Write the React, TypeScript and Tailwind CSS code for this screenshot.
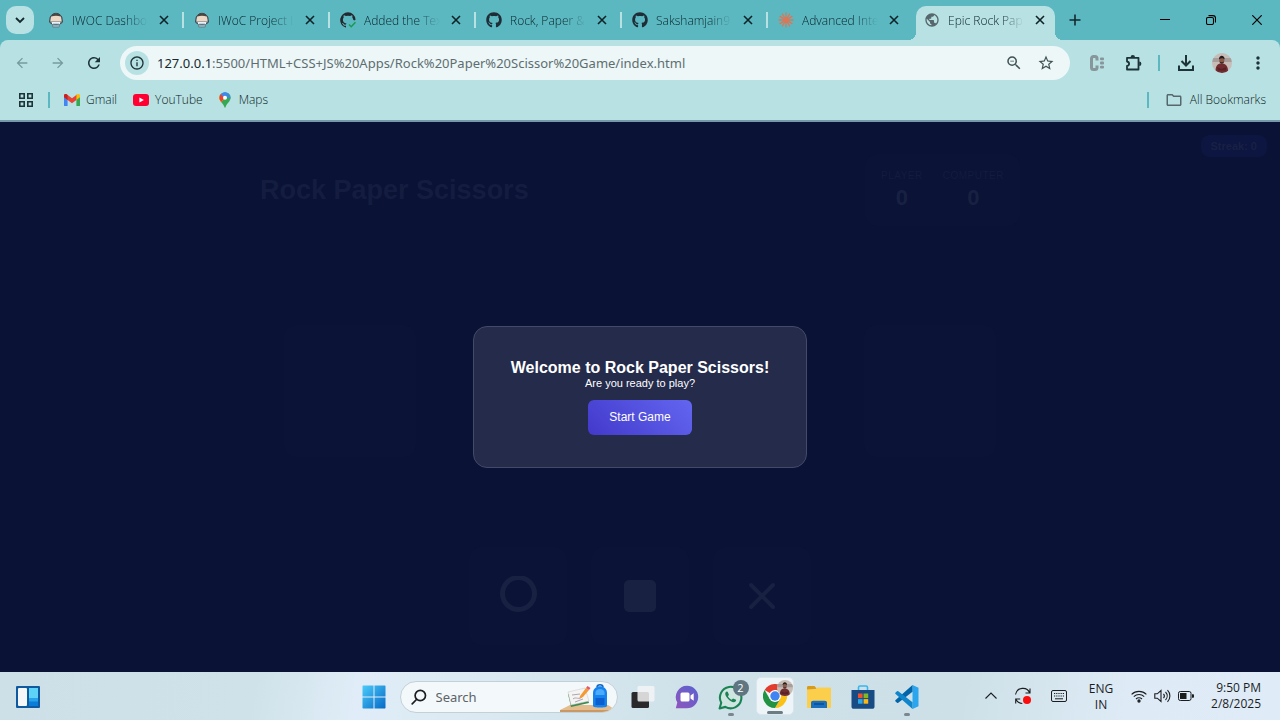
import type { ReactNode } from "react";
import { FaGithub } from "react-icons/fa";
import {
  MdArrowBack,
  MdArrowForward,
  MdInfoOutline,
  MdMoreVert,
  MdPublic,
  MdRefresh,
  MdStarBorder,
  MdOutlineZoomOut,
  MdOutlineFolder,
} from "react-icons/md";

function BotIcon() {
  return (
    <svg viewBox="0 0 16 16" className="size-4">
      <path d="M4 11h8l-.800 4H4.800Z" fill="#cfe6ee" stroke="#4c5a66" strokeWidth=".6" />
      <path d="M1.800 7.500a6.200 6.200 0 0 1 12.400 0c.500 1.800.200 3.600-1.400 4-2.500.800-7.100.800-9.600 0-1.600-.4-1.900-2.200-1.400-4Z" fill="#8d9399" stroke="#3c3f46" strokeWidth="1" />
      <path d="M2.800 7a5.200 5.200 0 0 1 10.400 0l.200 2.300H2.600Z" fill="#ecd8c4" />
      <path d="M3.300 4.600a5 5 0 0 1 9.400 0c-2.500-1-6.900-1-9.400 0Z" fill="#4a4540" />
      <path d="M4 10h8v2H4Z" fill="#e8f1f5" />
      <path d="M6 11.500v3M8 11.500v3M10 11.500v3" stroke="#31576b" strokeWidth=".8" />
    </svg>
  );
}

function GithubCheckIcon() {
  return (
    <svg viewBox="0 0 16 16" className="size-4">
      <path
        d="M8 .3A7.800 7.800 0 0 0 5.500 15.500c.4.1.5-.2.5-.4v-1.400c-2 .4-2.600-.5-2.800-1-.1-.3-.5-1-.9-1.200-.3-.2-.7-.6 0-.6.700 0 1.200.6 1.300.9.700 1.200 1.900.9 2.400.7.1-.5.3-.9.500-1.100-1.800-.2-3.600-.9-3.600-3.900 0-.9.3-1.600.8-2.100-.1-.2-.4-1 .1-2.100 0 0 .7-.2 2.200.8a7.300 7.300 0 0 1 4 0c1.500-1 2.200-.8 2.200-.8.4 1.100.2 1.900.1 2.100.5.5.8 1.200.8 2.100l1 .9 1.500-.7A7.800 7.800 0 0 0 8 .3Z"
        fill="#24292f"
      />
      <path d="m9 12.500 2.200 2.200 4.300-4.500" fill="none" stroke="#1a9a50" strokeWidth="1.500" />
    </svg>
  );
}

function BurstIcon() {
  return (
    <svg viewBox="0 0 16 16" className="size-4" stroke="#d97757" strokeWidth="1.300" strokeLinecap="round">
      <path d="M8 1v14M1 8h14M4.400 2l7.200 12M11.600 2 4.400 14M2 4.400l12 7.200M14 4.400 2 11.600" />
    </svg>
  );
}

function Avatar({ className }: { className: string }) {
  return (
    <svg viewBox="0 0 20 20" className={className}>
      <defs>
        <clipPath id="face">
          <circle cx="10" cy="10" r="10" />
        </clipPath>
      </defs>
      <g clipPath="url(#face)">
        <rect width="20" height="20" fill="#c7bcb6" />
        <path d="M0 5h20v4H0Z" fill="#a79d9a" />
        <path d="M3.500 20c-.2-7 1.500-9.500 6-9.500s6.800 2.500 6.500 9.500Z" fill="#702c2f" />
        <path d="m5 14 4.500 2 5-2-1 3.500H6Z" fill="#5a2026" />
        <ellipse cx="9.800" cy="7.200" rx="2.500" ry="3.200" fill="#8a5a48" />
        <path d="M7 6.500c-.2-5 5.800-5 5.600 0-1.500-1.800-4-1.800-5.600 0Z" fill="#241b1c" />
        <path d="M7.600 8.500c.6 3 3.800 3 4.400 0-1 1-3.400 1-4.400 0Z" fill="#3a2523" />
      </g>
    </svg>
  );
}

const tabs: { title: string; icon: ReactNode }[] = [
  { title: "IWOC Dashbo", icon: <BotIcon /> },
  { title: "IWoC Project I", icon: <BotIcon /> },
  { title: "Added the Tex", icon: <GithubCheckIcon /> },
  { title: "Rock, Paper &", icon: <FaGithub className="size-4 text-[#1f2d36]" /> },
  { title: "Sakshamjain9", icon: <FaGithub className="size-4 text-[#1f2d36]" /> },
  { title: "Advanced Inte", icon: <BurstIcon /> },
];

function TabBody({ title, icon }: { title: string; icon: ReactNode }) {
  return (
    <>
      <span className="shrink-0">{icon}</span>
      <span className="w-[76px] shrink-0 whitespace-nowrap pt-0.5 text-[12px] leading-4 font-[350] text-[#0c2429] [mask-image:linear-gradient(to_right,black_70%,transparent)]">
        {title}
      </span>
      <button type="button" aria-label={`Close ${title}`} className="flex size-4 shrink-0 items-center justify-center">
        <svg viewBox="0 0 10 10" className="size-2.5" stroke="#0d2327" strokeWidth="1.600">
          <path d="m1 1 8 8M9 1 1 9" />
        </svg>
      </button>
    </>
  );
}

function TabStrip() {
  return (
    <div className="flex h-10 items-stretch bg-[#5bb8c1]">
      <div className="flex w-[38px] shrink-0 items-center pl-1.5">
        <button type="button" aria-label="Search tabs" className="flex size-7 items-center justify-center rounded-[10px] bg-[#b8e1e4]">
          <svg viewBox="0 0 10 10" className="size-2.5" fill="none" stroke="#12292d" strokeWidth="1.800">
            <path d="m1 3 4 4 4-4" />
          </svg>
        </button>
      </div>
      <div className="flex min-w-0">
        {tabs.map((tab, i) => (
          <div key={tab.title} className="flex w-[146px] items-center gap-2 pl-2.5">
            <TabBody {...tab} />
            {i < tabs.length - 1 && <span className="-mr-1 ml-0.5 h-4 w-0.5 shrink-0 bg-[#b8e1e4]" />}
          </div>
        ))}
        <div className="relative mt-1.5 mr-[5px] ml-0.5 flex w-[139px] items-center gap-2 rounded-t-[10px] bg-[#b8e1e4] pb-1.5 pl-2">
          <span className="absolute bottom-0 -left-2 size-2 bg-[radial-gradient(circle_at_0_0,#5bb8c1_8px,#b8e1e4_8px)]" />
          <span className="absolute -right-2 bottom-0 size-2 bg-[radial-gradient(circle_at_100%_0,#5bb8c1_8px,#b8e1e4_8px)]" />
          <TabBody title="Epic Rock Pap" icon={<MdPublic className="size-4 text-[#56686c]" />} />
        </div>
      </div>
      <button type="button" aria-label="New tab" className="flex w-[30px] shrink-0 items-center justify-center">
        <svg viewBox="0 0 12 12" className="size-3" stroke="#12292d" strokeWidth="1.600">
          <path d="M6 .5v11M.5 6h11" />
        </svg>
      </button>
      <div className="ml-auto flex shrink-0">
        <button type="button" aria-label="Minimize" className="flex w-[46px] items-center justify-center">
          <svg viewBox="0 0 10 10" className="size-2.5" stroke="#000" strokeWidth="1">
            <path d="M0 4.500h10" />
          </svg>
        </button>
        <button type="button" aria-label="Restore" className="flex w-[46px] items-center justify-center">
          <svg viewBox="0 0 10 10" className="size-2.5" fill="none" stroke="#000" strokeWidth="1.100">
            <rect x=".5" y="2.500" width="7" height="7" rx="1.500" />
            <path d="M2.500.6H7a2.500 2.500 0 0 1 2.500 2.500v4.400" />
          </svg>
        </button>
        <button type="button" aria-label="Close window" className="flex w-[46px] items-center justify-center">
          <svg viewBox="0 0 10 10" className="size-2.5" stroke="#000" strokeWidth="1.200">
            <path d="m.3.300 9.400 9.400M9.700.300.300 9.700" />
          </svg>
        </button>
      </div>
    </div>
  );
}

function ToolButton({ label, children }: { label: string; children: ReactNode }) {
  return (
    <button type="button" aria-label={label} className="flex h-7 w-9 shrink-0 items-center justify-center text-[#1d3337]">
      {children}
    </button>
  );
}

function Toolbar() {
  return (
    <div className="bg-[#5bb8c1]">
      <div className="flex h-[46px] items-center rounded-t-lg bg-[#b8e1e4] px-1">
        <ToolButton label="Back">
          <MdArrowBack className="size-4 text-[#769a9d]" />
        </ToolButton>
        <ToolButton label="Forward">
          <MdArrowForward className="size-4 text-[#769a9d]" />
        </ToolButton>
        <ToolButton label="Reload">
          <MdRefresh className="size-[18px]" />
        </ToolButton>
        <div className="ml-2 flex h-[34px] flex-1 items-center rounded-full bg-[#edf7f8] pr-2 pl-[5px]">
          <button type="button" aria-label="Site information" className="flex size-6 items-center justify-center rounded-full bg-[#b8e1e4]">
            <MdInfoOutline className="size-4 text-[#1d3337]" />
          </button>
          <div className="ml-2 flex-1 whitespace-nowrap font-['Noto_Sans',sans-serif] text-[13px] leading-5 text-[#5e6e70]">
            <span className="text-[#17292c]">127.0.0.1</span>:5500/HTML+CSS+JS%20Apps/Rock%20Paper%20Scissor%20Game/index.html
          </div>
          <button type="button" aria-label="Zoom" className="flex w-8 justify-center">
            <MdOutlineZoomOut className="size-[18px] text-[#3f5356]" />
          </button>
          <button type="button" aria-label="Bookmark this tab" className="flex w-8 justify-center">
            <MdStarBorder className="size-[18px] text-[#3f5356]" />
          </button>
        </div>
        <div className="ml-[9px] flex items-center">
          <ToolButton label="C extension">
            <svg viewBox="0 0 16 16" className="size-4" fill="#87969b">
              <path d="M8 5.500V3.500a2 2 0 0 0-2-2H4.500a2 2 0 0 0-2 2v9a2 2 0 0 0 2 2H6a2 2 0 0 0 2-2v-2" fill="none" stroke="#87969b" strokeWidth="3" />
              <rect x="11" y="2.500" width="4" height="2.800" rx="1" />
              <rect x="11" y="6.600" width="4" height="2.800" rx="1" />
              <rect x="11" y="10.700" width="4" height="2.800" rx="1" />
            </svg>
          </ToolButton>
          <ToolButton label="Extensions">
            <svg viewBox="0 0 18 18" className="size-[18px]">
              <path d="M3 3.800h11.500v11.700H3v-3.500c2.800-.5 2.800-4 0-4.500Z" fill="none" stroke="#1d3337" strokeWidth="1.800" strokeLinejoin="round" />
              <path d="M6.600 3.200a2.200 2.200 0 0 1 4.400 0ZM15.200 7.500a2.200 2.200 0 0 1 0 4.400Z" fill="#1d3337" />
            </svg>
          </ToolButton>
          <span className="mr-2 ml-[7px] h-4 w-0.5 bg-[#5bb8c1]" />
          <ToolButton label="Downloads">
            <svg viewBox="0 0 18 18" className="size-[18px]" fill="none" stroke="#1d3337" strokeWidth="2">
              <path d="M9 1v10M4.500 7 9 11.500 13.500 7M2 11.500V16h14v-4.500" />
            </svg>
          </ToolButton>
          <ToolButton label="Profile">
            <Avatar className="size-5" />
          </ToolButton>
          <ToolButton label="Menu">
            <MdMoreVert className="size-5" />
          </ToolButton>
        </div>
      </div>
    </div>
  );
}

function BookmarksBar() {
  return (
    <nav className="flex h-9 items-center border-b-2 border-[#7898ab] bg-[#b8e1e4] px-3.5 pb-1.5 text-[12px] leading-4 font-[350] text-[#0c1e21]">
      <button type="button" aria-label="Apps" className="flex w-6 justify-center">
        <svg viewBox="0 0 14 14" className="size-3.5" fill="none" stroke="#1d3337" strokeWidth="1.600">
          <path d="M.8.800h4.400v4.400H.8ZM8.800.800h4.400v4.400H8.800ZM.8 8.800h4.400v4.400H.8ZM8.800 8.800h4.400v4.400H8.800Z" />
        </svg>
      </button>
      <span className="ml-2.5 h-4 w-0.5 bg-[#5bb8c1]" />
      <a href="#gmail" className="ml-3.5 flex items-center gap-1.5">
        <svg viewBox="0 0 16 12" className="h-3 w-4">
          <path d="M0 1.500V12h3.600V5Z" fill="#4285f4" />
          <path d="M16 1.500V12h-3.600V5Z" fill="#34a853" />
          <path d="M0 1.500C0 0 1.800-.5 3 .5l5 3.800 5-3.800v5L8 9.200 0 3.300Z" fill="#ea4335" />
          <path d="M12.400 1C14-.600 16 0 16 1.600v1.700l-3.600 2.800Z" fill="#fbbc04" />
          <path d="M3.600 1C2-.600 0 0 0 1.600v1.700l3.600 2.800Z" fill="#c5221f" />
        </svg>
        Gmail
      </a>
      <a href="#youtube" className="ml-4 flex items-center gap-1.5">
        <svg viewBox="0 0 16 12" className="h-3 w-4">
          <rect width="16" height="12" rx="3" fill="#ff0033" />
          <path d="m6.400 3.400 4.500 2.600-4.500 2.600Z" fill="#fff" />
        </svg>
        YouTube
      </a>
      <a href="#maps" className="ml-3.5 flex items-center gap-1.5">
        <svg viewBox="0 0 16 16" className="size-4">
          <defs>
            <clipPath id="pin">
              <path d="M8 .2a5.600 5.600 0 0 0-5.600 5.600c0 3.600 3.600 5 5 9.300.2.900 1 .9 1.200 0 1.400-4.300 5-5.700 5-9.300A5.600 5.600 0 0 0 8 .2Z" />
            </clipPath>
          </defs>
          <g clipPath="url(#pin)">
            <rect width="16" height="16" fill="#34a853" />
            <path d="M8 5.800 0 15V3Z" fill="#fbbc04" />
            <path d="M8 5.800 2.500 12-1 5l4-3.500Z" fill="#fbbc04" />
            <path d="m3.500 1.500 4.500 4.300-4 4.500L0 5Z" fill="#ea4335" />
            <path d="M3.600 2.300 8 6l5-5.500L7-1Z" fill="#4285f4" />
            <path d="m8 5.800 4.500-4.500L16 4v3Z" fill="#4285f4" opacity=".7" />
          </g>
          <circle cx="8" cy="5.800" r="2" fill="#fff" />
        </svg>
        Maps
      </a>
      <span className="mr-4 ml-auto h-4 w-0.5 bg-[#5bb8c1]" />
      <a href="#bookmarks" className="flex items-center gap-[7px]">
        <MdOutlineFolder className="size-[18px] text-[#56686c]" />
        All Bookmarks
      </a>
    </nav>
  );
}

function Score({ label, value }: { label: string; value: number }) {
  return (
    <div className="flex flex-col items-center gap-1">
      <span className="text-[10px] leading-3 tracking-wider text-[#131c3f]">{label}</span>
      <span className="text-[22px] leading-6 font-bold text-[#182142]">{value}</span>
    </div>
  );
}

function Game() {
  return (
    <main className="relative flex-1 bg-[#0a1235] font-['Liberation_Sans',sans-serif]">
      <div className="mx-auto max-w-[760px] pt-8">
        <header className="flex h-[72px] items-center justify-between">
          <h1 className="text-[27px] leading-8 font-bold text-[#141d40]">Rock Paper Scissors</h1>
          <div className="flex gap-5 self-stretch rounded-xl bg-[#0b1336] px-4 pt-4">
            <Score label="PLAYER" value={0} />
            <Score label="COMPUTER" value={0} />
          </div>
        </header>
        <div className="mt-[99px] flex justify-between px-6">
          <div className="size-[132px] rounded-xl bg-[#0b1336]" />
          <div className="size-[132px] rounded-xl bg-[#0b1336]" />
        </div>
        <div className="mt-[90px] flex justify-center gap-6 pb-6">
          <button type="button" aria-label="Rock" className="flex size-[98px] items-center justify-center rounded-xl bg-[#0b1336]">
            <svg viewBox="0 0 40 40" className="size-10" fill="none" stroke="#182142" strokeWidth="5">
              <circle cx="20.500" cy="17.500" r="16" />
            </svg>
          </button>
          <button type="button" aria-label="Paper" className="flex size-[98px] items-center justify-center rounded-xl bg-[#0b1336]">
            <span className="size-8 rounded-[5px] bg-[#182142]" />
          </button>
          <button type="button" aria-label="Scissors" className="flex size-[98px] items-center justify-center rounded-xl bg-[#0b1336]">
            <svg viewBox="0 0 28 28" className="size-7" stroke="#182142" strokeWidth="4" strokeLinecap="round">
              <path d="m3 3 22 22M25 3 3 25" />
            </svg>
          </button>
        </div>
      </div>
      <div className="absolute top-[13px] right-[13px] rounded-lg bg-[#0d1541] px-2.5 py-1 text-[11px] leading-3.5 font-bold text-[#182145]">
        Streak: 0
      </div>
      <div className="absolute inset-0 flex items-center justify-center">
        <div role="dialog" aria-labelledby="welcome" className="flex w-[334px] flex-col items-center rounded-[14px] border border-[#434a67] bg-[#242b4b] py-8 text-center text-white">
          <h2 id="welcome" className="text-[16px] leading-[18px] font-bold">
            Welcome to Rock Paper Scissors!
          </h2>
          <p className="text-[11px] leading-3">Are you ready to play?</p>
          <button type="button" className="mt-[11px] rounded-md bg-linear-45 from-[#4338ca] to-[#6366f1] px-[21px] py-2.5 text-[12px] leading-[15px]">
            Start Game
          </button>
        </div>
      </div>
    </main>
  );
}

function AppCell({ label, running, children }: { label: string; running?: boolean; children: ReactNode }) {
  return (
    <button type="button" aria-label={label} className="relative flex h-12 w-11 items-center justify-center pt-0.5">
      {children}
      {running && <span className="absolute bottom-1 left-1/2 h-[3px] w-1.5 -translate-x-1/2 rounded-full bg-[#7b878d]" />}
    </button>
  );
}

function Taskbar() {
  return (
    <footer className="grid h-12 grid-cols-[1fr_auto_1fr] items-center bg-[linear-gradient(100deg,#cde0e7_0%,#cfe2e9_20%,#e0edf8_28%,#dae9f2_38%,#cee1e8_55%,#cde0e7_75%,#deebf6_88%,#dfecf7_100%)] text-[12px] leading-4 text-[#1b1d1f]">
      <button type="button" aria-label="Widgets" className="ml-4 flex w-6 pt-0.5">
        <svg viewBox="0 0 24 22" className="h-[22px] w-6">
          <rect width="24" height="22" rx="1" fill="#0f5a9e" />
          <rect x="2" y="2" width="9" height="18" rx="1" fill="#f5f6f7" />
          <rect x="13" y="2" width="9" height="10" fill="#5ed3f8" />
          <rect x="13" y="12" width="9" height="4" fill="#27a3ea" />
          <rect x="13" y="15.500" width="9" height="4.500" fill="#0a7ddb" />
        </svg>
      </button>
      <div className="flex items-center">
        <AppCell label="Start">
          <svg viewBox="0 0 24 24" className="size-6">
            <defs>
              <linearGradient id="win" x1="0" y1="0" x2="1" y2="1">
                <stop offset="0" stopColor="#4ccbfa" />
                <stop offset="1" stopColor="#0569c6" />
              </linearGradient>
            </defs>
            <path d="M1 .5h10.500v11H.5V1ZM12.500.5H23l.5.500v10.500h-11ZM.5 12.500h11v11H1l-.5-.5ZM12.500 12.500h11V23l-.5.500H12.500Z" fill="url(#win)" />
          </svg>
        </AppCell>
        <label className="mt-0.5 mr-[3px] ml-1 flex h-8 w-[218px] items-center overflow-hidden rounded-full border border-[#c3d0d8] bg-[#f3f8fa] pl-2.5">
          <svg viewBox="0 0 16 16" className="size-4 shrink-0" fill="none" stroke="#1b1d1f" strokeWidth="1.700" strokeLinecap="round">
            <circle cx="9.300" cy="6.500" r="5.200" />
            <path d="M5.500 10.500 1.200 14.800" />
          </svg>
          <input type="text" aria-label="Search" placeholder="Search" className="ml-[9px] w-[120px] bg-transparent font-['Noto_Sans',sans-serif] text-[13px] leading-5 outline-none placeholder:text-[#5c6468]" />
          <svg viewBox="0 0 58 30" className="ml-auto h-[30px] w-[58px] shrink-0">
            <path d="M1 30v-2l10-5h38l6 4-3 3Z" fill="#e3bd8d" />
            <path d="M1 28h54v2H1Z" fill="#c99865" />
            <path d="m9 12 17-4 4 13-18 4Z" fill="#3d8a4f" />
            <path d="m9 10 17-4 4 13-18 4Z" fill="#f6f4f2" stroke="#c9c6cc" strokeWidth=".5" />
            <path d="m13 13 8-1M14 17c3-3 6 2 10-3M16 20l8-3" stroke="#a9a5b4" strokeWidth="1" fill="none" />
            <path d="m21 14 6-8 3 2-6 7-3.500 1.500Z" fill="#f59a32" />
            <path d="m27 6 1.500-2 3 2L30 8Z" fill="#e8546b" />
            <path d="M38 5c0-3 6-3 6 0" fill="none" stroke="#1565c0" strokeWidth="1.500" />
            <path d="M34 24V11c0-9 14-9 14 0v13c0 2-14 2-14 0Z" fill="#1682ee" />
            <path d="M36.500 16h9v7h-9Z" fill="#0a5fd0" />
            <path d="M36.500 10c1-4 8-4 9 0v3h-9Z" fill="#49abfb" />
          </svg>
        </label>
        <AppCell label="Task view">
          <svg viewBox="0 0 24 24" className="size-6">
            <rect x=".5" y="7" width="17.500" height="16" rx="1.500" fill="#2a2a2c" />
            <rect x="6.500" y="1" width="17" height="15.500" rx="1.500" fill="#f4f5f6" opacity=".85" />
          </svg>
        </AppCell>
        <AppCell label="Chat">
          <svg viewBox="0 0 24 24" className="size-6">
            <defs>
              <linearGradient id="chat" x1="0" y1="1" x2="1" y2="0">
                <stop offset="0" stopColor="#8f55bd" />
                <stop offset="1" stopColor="#5963d0" />
              </linearGradient>
            </defs>
            <path d="M12 .8A11.200 11.200 0 0 0 2.300 17.600L.8 23.200h11.200A11.200 11.200 0 0 0 12 .8Z" fill="url(#chat)" />
            <rect x="5.500" y="7.500" width="9" height="9" rx="1.500" fill="#fff" />
            <path d="m15.500 10.500 3.200-2.300v7.600l-3.200-2.300Z" fill="#fff" />
          </svg>
        </AppCell>
        <AppCell label="WhatsApp" running>
          <svg viewBox="0 0 24 24" className="size-[25px]">
            <path d="M1.500 22.500 3.100 17A10.300 10.300 0 1 1 7 21Z" fill="#cfe6e0" stroke="#1a8354" strokeWidth="2" strokeLinejoin="round" />
            <path d="M8 6.500c-1.800 1-1.200 3.800 1.500 6.700s5.700 4.400 7.300 2.700c.9-1 .7-1.500 0-1.900l-1.900-.9c-.8-.3-1.200 1-1.800 1-1-.1-3.500-2.500-3.500-3.300 0-.5 1-1 .8-1.700L9.500 7c-.3-.600-.9-.9-1.500-.5Z" fill="#1a8354" />
          </svg>
          <span className="absolute top-2 right-1 flex size-4 items-center justify-center rounded-full bg-[#5f7580] text-[11px] leading-4 text-white">2</span>
        </AppCell>
        <button type="button" aria-label="Chrome" className="relative mx-[3px] flex size-[38px] items-center justify-center rounded-[5px] border border-[#dbe6ec] bg-[#edf5f8]">
          <svg viewBox="0 0 24 24" className="size-6">
            <path d="M12 12 1.600 6A12 12 0 0 1 22.400 6H12Z" fill="#e33b2e" />
            <path d="M12 6h10.400A12 12 0 0 1 12 24l5.200-9Z" fill="#fbc116" />
            <path d="M1.600 6A12 12 0 0 0 12 24l5.200-9L6.800 15Z" fill="#229342" />
            <circle cx="12" cy="12" r="6" fill="#fff" />
            <circle cx="12" cy="12" r="4.700" fill="#4084f4" />
          </svg>
          <Avatar className="absolute top-0.5 right-0 size-4" />
          <span className="absolute bottom-0 left-1/2 h-[3px] w-4 -translate-x-1/2 rounded-full bg-[#6d7b82]" />
        </button>
        <AppCell label="File Explorer">
          <svg viewBox="0 0 26 24" className="h-6 w-[26px]">
            <path d="M1 5V2.500C1 1.500 1.500 1 2.500 1h6L11 4Z" fill="#d99a16" />
            <path d="M1 4.500h8l2-2h13c.7 0 1 .4 1 1V22c0 .7-.3 1-1 1H2c-.6 0-1-.300-1-1Z" fill="#fbcf4c" />
            <path d="M5 23v-5c0-1.500.8-2.300 2.300-2.300h11.400c1.500 0 2.300.8 2.300 2.300v5Z" fill="#1a70c0" />
            <path d="M8 19h10" stroke="#0c4c8c" strokeWidth="1.500" />
          </svg>
        </AppCell>
        <AppCell label="Store">
          <svg viewBox="0 0 24 26" className="h-[26px] w-6">
            <path d="M7.500 6V3.500C7.500 2.600 8 2 9 2h6c1 0 1.500.6 1.500 1.500V6" fill="none" stroke="#38b6ee" strokeWidth="1.600" />
            <path d="M.5 6h23v16.500c0 1.500-.8 2.300-2.300 2.300H2.800C1.300 24.800.5 24 .5 22.500Z" fill="#184b83" />
            <path d="M7 9.500h4.600v4.600H7Z" fill="#f2502a" />
            <path d="M12.600 9.500h4.600v4.600h-4.600Z" fill="#7fba24" />
            <path d="M7 15.100h4.600v4.600H7Z" fill="#28a8ea" />
            <path d="M12.600 15.100h4.600v4.600h-4.600Z" fill="#fdb813" />
          </svg>
        </AppCell>
        <AppCell label="Visual Studio Code" running>
          <svg viewBox="0 0 24 24" className="size-6">
            <path d="m17.500 0 6 2.800v18.400l-6 2.800Z" fill="#2aa5ee" />
            <path d="M17.500 0v6.800L3.300 17.700a1 1 0 0 1-1.300 0L.6 16.400a1 1 0 0 1 0-1.500Z" fill="#0065a9" />
            <path d="M17.500 24v-6.800L3.300 6.300a1 1 0 0 0-1.300 0L.6 7.600a1 1 0 0 0 0 1.500Z" fill="#0f85cc" />
          </svg>
        </AppCell>
      </div>
      <div className="flex items-center justify-end pr-[19px]">
        <button type="button" aria-label="Show hidden icons" className="flex w-8 justify-center">
          <svg viewBox="0 0 12 12" className="size-3" fill="none" stroke="#1b1d1f" strokeWidth="1.100">
            <path d="m.5 8.500 5.500-5.500 5.500 5.500" />
          </svg>
        </button>
        <button type="button" aria-label="Updates" className="flex w-8 justify-center">
          <svg viewBox="0 0 18 18" className="size-[18px]" fill="none" stroke="#1b1d1f" strokeWidth="1.100">
            <path d="M1.500 7.500A7.500 7.500 0 0 1 15.800 6M16 1.500V6h-4.500M1.700 16.500V12h4.500M1.800 12a7.500 7.500 0 0 0 6.500 4.500" />
            <circle cx="13" cy="13" r="4" fill="#fb0d0d" stroke="none" />
          </svg>
        </button>
        <button type="button" aria-label="Touch keyboard" className="flex w-10 justify-center">
          <svg viewBox="0 0 16 12" className="h-3 w-4" fill="none" stroke="#1b1d1f" strokeWidth="1">
            <rect x=".5" y=".5" width="15" height="11" rx="1.500" />
            <path d="M3 3.500h10M3 6h10" strokeDasharray="1.200 1" strokeWidth="1.200" />
            <path d="M4 8.800h8" />
          </svg>
        </button>
        <button type="button" className="w-11 pt-0.5 text-center">
          ENG
          <br />
          IN
        </button>
        <button type="button" aria-label="Network, volume and battery" className="flex items-center gap-[7px] pr-[17px] pl-2">
          <svg viewBox="0 0 16 16" className="size-4" fill="none" stroke="#1b1d1f" strokeWidth="1.100">
            <path d="M.6 6.400a10.500 10.500 0 0 1 14.800 0M2.800 8.700a7.400 7.400 0 0 1 10.400 0M5 11a4.200 4.200 0 0 1 6 0" />
            <circle cx="8" cy="13" r="1.100" fill="#1b1d1f" />
          </svg>
          <svg viewBox="0 0 17 14" className="h-3.5 w-[17px]" fill="none" stroke="#1b1d1f" strokeWidth="1.100">
            <path d="M.8 4.800h2.500L7 1.500v11L3.300 9.200H.8ZM9.500 4.800c1 1.200 1 3.200 0 4.400M11.500 3c2.200 2.300 2.200 5.700 0 8M13.500 1.200c3.200 3.300 3.200 8.300 0 11.600" />
          </svg>
          <svg viewBox="0 0 16 10" className="h-2.5 w-4">
            <rect x=".5" y=".5" width="12.500" height="9" rx="1.800" fill="none" stroke="#1b1d1f" />
            <path d="M2 2h6.500v6H2Z" fill="#1b1d1f" />
            <path d="M14 3.200h1c.6 0 1 .4 1 1v1.600c0 .6-.4 1-1 1h-1Z" fill="#1b1d1f" />
          </svg>
        </button>
        <button type="button" className="text-right">
          9:50 PM
          <br />
          2/8/2025
        </button>
      </div>
    </footer>
  );
}

export default function App() {
  return (
    <div className="flex min-h-screen flex-col font-['Open_Sans','Noto_Sans',sans-serif]">
      <TabStrip />
      <Toolbar />
      <BookmarksBar />
      <Game />
      <Taskbar />
    </div>
  );
}
